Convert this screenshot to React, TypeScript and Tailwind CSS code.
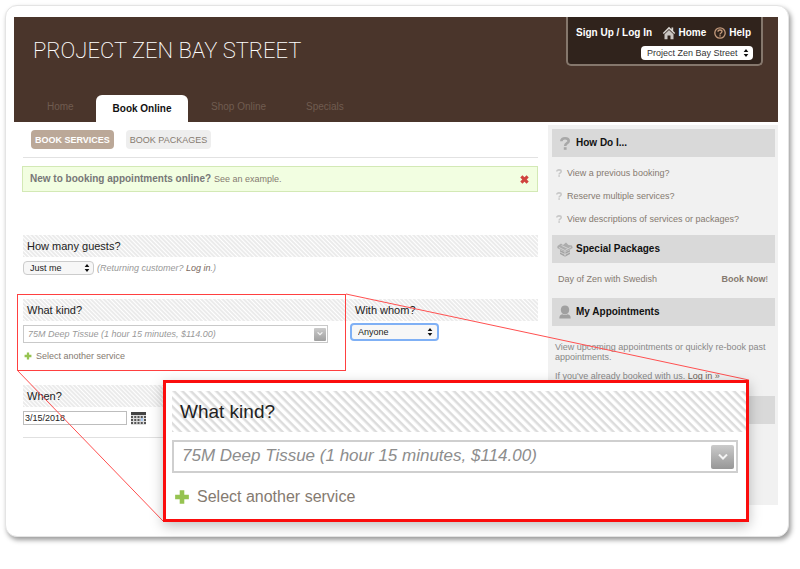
import { useState } from "react"
import type { ReactNode } from "react"

const stripes = "bg-[repeating-linear-gradient(45deg,#ebebeb_0px,#ebebeb_1px,#fff_2px,#ebebeb_3px)]"
const wideStripes = "bg-[repeating-linear-gradient(45deg,#dcdcdc_0px,#dcdcdc_1px,#fff_2px,#fff_4px,#dcdcdc_6px)]"

function Arrows() {
  return (
    <svg viewBox="0 0 6 10" className="pointer-events-none absolute top-1/2 right-1 h-[9px] w-[6px] -translate-y-1/2">
      <path d="M3 0.5 5.6 4H0.4zM3 9.5 5.6 6H0.4z" fill="#111" />
    </svg>
  )
}

function Picker({ label, option, className }: { label: string; option: string; className: string }) {
  return (
    <span className="relative block">
      <select aria-label={label} className={`block appearance-none text-[9px] leading-[12px] ${className}`}>
        <option>{option}</option>
      </select>
      <Arrows />
    </span>
  )
}

function Plus({ className }: { className: string }) {
  return (
    <svg viewBox="0 0 14 14" className={className}>
      <path d="M5 1h4v4h4v4H9v4H5V9H1V5h4z" fill="#96c351" />
    </svg>
  )
}

function Chevron({ className }: { className: string }) {
  return (
    <svg viewBox="0 0 10 6" className={className}>
      <path d="M1 0.5 5 4.5 9 0.5" fill="none" stroke="#f4f4f4" strokeWidth="2" />
    </svg>
  )
}

function QuestionIcon({ className }: { className: string }) {
  return (
    <svg viewBox="0 0 10 13" className={className}>
      <path d="M1.3 4.2C1.3 2.3 2.8 1.3 5 1.3s3.7 1 3.7 2.8C8.7 6.4 5.2 6 5.2 9" fill="none" stroke="currentColor" strokeWidth="2.6" />
      <path d="M3.8 10.2h2.8v2.6H3.8z" fill="currentColor" />
    </svg>
  )
}

function BoxIcon() {
  return (
    <svg viewBox="0 0 16 15" className="h-[15px] w-4">
      <path d="M0.5 4 4 1.5 6 3l3-2.5L11.500 3l3.500 0.500 0.700 2.500-2.700 1.500-5 2.500L3 7.500 0.300 6z" fill="#adadad" />
      <path d="M3 8v4l5 2.700L13 12V8L8 10.300z" fill="#a2a2a2" />
      <path d="M2 5.500 8 8.500 14 5M4.500 3.500 11 6.500M8 9v5.500M3 10l5 2.500 5-2.500" fill="none" stroke="#d9d9d9" strokeWidth="0.8" />
    </svg>
  )
}

function PersonIcon() {
  return (
    <svg viewBox="0 0 12 14" className="h-[14px] w-3">
      <path d="M6 0.5c2.5 0 4.2 1.500 4.2 4.200C10.200 7.600 8.400 9.400 6 9.400S1.800 7.600 1.800 4.700C1.800 2 3.500 0.500 6 0.500z" fill="#a0a0a0" />
      <path d="M0.3 13.5c0-3 1-3.900 3-4.300 1.500 1.100 3.900 1.100 5.400 0 2 0.400 3 1.300 3 4.300z" fill="#a0a0a0" />
    </svg>
  )
}

function HomeIcon() {
  return (
    <svg viewBox="0 0 14 14" className="h-[14px] w-[14px]">
      <path d="M7 0.8 0.8 7l1 1L7 2.9 12.2 8l1-1-2-2V1.500H9.500v1.700z" fill="#d9d5d1" />
      <path d="M2.5 8.2 7 4l4.500 4.200v5h-3V9.500h-3v3.700h-3z" fill="#c9c5c1" />
    </svg>
  )
}

function HelpIcon() {
  return (
    <svg viewBox="0 0 12 12" className="h-3 w-3">
      <circle cx="6" cy="6" r="5.2" fill="none" stroke="#c49a7c" strokeWidth="1.3" />
      <path d="M4 4.8C4 3.5 4.9 3 6 3s2 0.6 2 1.6C8 6 6 6 6 7.4" fill="none" stroke="#c49a7c" strokeWidth="1.3" />
      <path d="M5.3 8.2h1.500v1.400H5.300z" fill="#c49a7c" />
    </svg>
  )
}

function CalendarIcon() {
  const rows = [5, 8, 11]
  return (
    <svg viewBox="0 0 15 13" className="h-[13px] w-[15px]">
      <path d="M0 0h15v13H0z" fill="#ddd" />
      <path d="M0 0h15v3H0z" fill="#444" />
      {rows.map((y) => (
        <path key={y} d={`M0 ${y}h15`} stroke="#555" strokeWidth="2" strokeDasharray="2 1.25" />
      ))}
      <path d="M10 6h2v3h-2z" fill="#a9c9f2" />
    </svg>
  )
}

function SideHeading({ icon, title }: { icon?: ReactNode; title?: string }) {
  return (
    <div className="flex h-7 items-center gap-[3px] bg-[#d9d9d9] pl-[5px]">
      <span className="flex w-4 justify-center">{icon}</span>
      {title && <h2 className="text-[10px] font-bold text-[#111]">{title}</h2>}
    </div>
  )
}

function ServiceCallout({ service }: { service: string }) {
  return (
    <div className="absolute top-[374px] right-[39px] left-[157px] border-[3px] border-[#fb0d0d] bg-white pt-2 pb-3 pl-[6px] shadow-[0_4px_12px_rgba(0,0,0,0.25)]">
      <h2 className={`flex h-[41px] items-center pl-2 text-[19px] text-[#222] ${wideStripes}`}>What kind?</h2>
      <div className="mt-2 mr-2 flex h-[33px] items-center border-2 border-[#cfcfcf] bg-white pr-[2px] pl-2">
        <input
          aria-label="Selected service"
          readOnly
          value={service}
          className="min-w-0 flex-1 pb-[2px] text-[17px] leading-6 text-[#8d8d8d] italic outline-none"
        />
        <button
          aria-label="Open service list"
          className="flex h-6 w-[23px] items-center justify-center rounded-[2px] bg-linear-to-b from-[#cbcbcb] to-[#979797]"
        >
          <Chevron className="w-[10px]" />
        </button>
      </div>
      <a href="#service" className="mt-[14px] flex items-center gap-[7px] pl-[2px] text-[16px] leading-5 text-[#857a70]">
        <Plus className="h-4 w-4" />
        Select another service
      </a>
    </div>
  )
}

export default function App() {
  const [showTip, setShowTip] = useState(true)
  const service = "75M Deep Tissue (1 hour 15 minutes, $114.00)"

  return (
    <div className="bg-white pt-[5px] pr-[11px] pb-8 pl-[5px] font-['Liberation_Sans',Arial,sans-serif] text-[9px] leading-[12px] text-[#857a70]">
      <div className="relative rounded-[12px] border border-[#e4e4e4] bg-white pt-[11px] pr-[10px] pb-[31px] pl-2 shadow-[2px_3px_5px_rgba(0,0,0,0.4)]">
        <header className="flex h-[105px] justify-between bg-[#4a352b]">
          <div className="flex flex-col justify-between pl-[19px]">
            <h1 className="pt-4 font-[Roboto,sans-serif] text-[22px] leading-9 font-extralight whitespace-nowrap text-white">
              PROJECT ZEN BAY STREET
            </h1>
            <nav className="flex items-end text-[10px] text-[#705c50]">
              <a href="#home" className="w-[63px] pb-[9px] pl-[14px]">Home</a>
              <a href="#book" className="flex h-[27px] w-[92px] items-center justify-center rounded-t-[6px] bg-white font-bold text-[#111]">
                Book Online
              </a>
              <a href="#shop" className="pb-[9px] pl-[23px]">Shop Online</a>
              <a href="#specials" className="pb-[9px] pl-10">Specials</a>
            </nav>
          </div>
          <div className="mr-[15px] h-[49px] w-[197px] rounded-b-[5px] border-2 border-t-0 border-[#85776c] bg-[#30231c] pt-[9px] pr-2 pl-2">
            <div className="flex items-center pr-[2px] text-[10px] leading-[14px] font-bold whitespace-nowrap text-white">
              <a href="#login">Sign Up / Log In</a>
              <a href="#top" className="ml-auto flex items-center gap-[3px]"><HomeIcon />Home</a>
              <a href="#help" className="ml-2 flex items-center gap-[3px]"><HelpIcon />Help</a>
            </div>
            <div className="mt-[6px] flex justify-end">
              <Picker
                label="Location"
                option="Project Zen Bay Street"
                className="h-[14px] w-[112px] rounded-[4px] bg-white pl-[6px] text-[#333]"
              />
            </div>
          </div>
        </header>

        <div className="flex gap-[10px] pl-2">
          <main className="min-w-0 flex-1">
            <div className="ml-px flex gap-3 border-b border-[#e2e2e2] pt-2 pb-2 pl-2">
              <button className="h-[19px] rounded-[4px] bg-[#bba898] px-1 font-bold text-white">BOOK SERVICES</button>
              <button className="h-[19px] rounded-[4px] bg-[#eee] px-1">BOOK PACKAGES</button>
            </div>

            <div className="h-[77px] pt-2">
              {showTip && (
                <div className="flex h-[26px] items-center border border-[#d3e9b5] bg-[#f2fee1] pr-2 pl-[7px]">
                  <p className="text-[10px]">
                    <b className="text-[#777]">New to booking appointments online?</b>{" "}
                    <a href="#example" className="text-[9px]">See an example.</a>
                  </p>
                  <button aria-label="Close" className="ml-auto" onClick={() => setShowTip(false)}>
                    <svg viewBox="0 0 10 10" className="h-[9px] w-[9px]">
                      <path d="M1.5 1.5 8.5 8.5M8.5 1.5 1.5 8.5" stroke="#d0433e" strokeWidth="3.4" />
                    </svg>
                  </button>
                </div>
              )}
            </div>

            <section className="ml-px h-16">
              <h2 className={`flex h-[22px] items-center pl-1 text-[11px] text-[#222] ${stripes}`}>How many guests?</h2>
              <div className="mt-1 flex items-center gap-[3px]">
                <Picker
                  label="How many guests?"
                  option="Just me"
                  className="h-[14px] w-[71px] rounded-[4px] border border-[#ccc] bg-[#f7f7f7] pl-[6px] text-[#222]"
                />
                <em className="text-[#999]">
                  (Returning customer? <a href="#login" className="text-[#7a6a5e]">Log in</a>.)
                </em>
              </div>
            </section>

            <div className="ml-px flex h-[86px]">
              <section className="relative w-[323px]">
                <h2 className={`flex h-[22px] items-center pl-1 text-[11px] text-[#222] ${stripes}`}>What kind?</h2>
                <div className="mt-1 mr-[18px] flex h-[18px] items-center border border-[#c9c9c9] bg-white pr-px pl-1">
                  <input
                    aria-label="What kind?"
                    readOnly
                    value={service}
                    className="min-w-0 flex-1 text-[9px] leading-[14px] text-[#999] italic outline-none"
                  />
                  <button
                    aria-label="Show services"
                    className="flex h-[13px] w-3 items-center justify-center rounded-[1px] bg-linear-to-b from-[#cbcbcb] to-[#a0a0a0]"
                  >
                    <Chevron className="w-[6px]" />
                  </button>
                </div>
                <a href="#service" className="mt-[7px] flex items-center gap-1 pl-px">
                  <Plus className="h-2 w-2" />
                  Select another service
                </a>
                <div className="pointer-events-none absolute top-[-5px] right-0 left-[-6px] h-[77px] border border-[#ff4040]" />
              </section>
              <section className="flex-1">
                <h2 className={`flex h-[22px] items-center pl-[9px] text-[11px] text-[#222] ${stripes}`}>With whom?</h2>
                <div className="mt-1 flex pl-[6px]">
                  <Picker
                    label="With whom?"
                    option="Anyone"
                    className="h-[14px] w-[85px] rounded-[2px] bg-[#f7f7f7] pl-[6px] text-[#222] ring-2 ring-[#7fb0f5]"
                  />
                </div>
              </section>
            </div>

            <section className="ml-px border-b border-[#e0e0e0] pb-3">
              <h2 className={`flex h-[22px] items-center pl-1 text-[11px] text-[#222] ${stripes}`}>
                <label htmlFor="date">When?</label>
              </h2>
              <div className="mt-1 flex items-center gap-1">
                <input
                  id="date"
                  defaultValue="3/15/2018"
                  className="h-[14px] w-[104px] border border-[#bdbdbd] bg-white pl-px text-[9px] text-[#222]"
                />
                <button aria-label="Pick a date"><CalendarIcon /></button>
              </div>
            </section>
          </main>

          <aside className="mt-[3px] w-[230px] bg-[#f1f1f1] pt-1 pr-[3px] pb-[81px] pl-1">
            <SideHeading icon={<QuestionIcon className="h-[13px] w-[10px] text-[#a8a8a8]" />} title="How Do I..." />
            <ul className="flex flex-col gap-[11px] py-[10px] pl-1">
              {["View a previous booking?", "Reserve multiple services?", "View descriptions of services or packages?"].map((text) => (
                <li key={text}>
                  <a href="#howto" className="flex items-center gap-[5px]">
                    <QuestionIcon className="h-2 w-[6px] text-[#c8c8c8]" />
                    {text}
                  </a>
                </li>
              ))}
            </ul>
            <SideHeading icon={<BoxIcon />} title="Special Packages" />
            <div className="flex justify-between pt-[10px] pr-[7px] pb-[13px] pl-[6px]">
              <a href="#zen">Day of Zen with Swedish</a>
              <a href="#book-now"><b>Book Now</b>!</a>
            </div>
            <SideHeading icon={<PersonIcon />} title="My Appointments" />
            <div className="flex h-[70px] flex-col gap-[9px] pt-4 pl-[3px] leading-[10px] text-[#888]">
              <p>View upcoming appointments or quickly re-book past appointments.</p>
              <p>If you&apos;ve already booked with us. <a href="#login" className="text-[#6d6157]">Log in »</a></p>
            </div>
            <SideHeading />
          </aside>
        </div>

        {/* Enlarged view of the service field, tied to the small one */}
        <svg className="pointer-events-none absolute inset-0 h-full w-full">
          <line x1="11" y1="364" x2="157" y2="515" stroke="#ff5050" />
          <line x1="340" y1="288" x2="95%" y2="374" stroke="#ff5050" />
        </svg>
        <ServiceCallout service={service} />
      </div>
    </div>
  )
}
